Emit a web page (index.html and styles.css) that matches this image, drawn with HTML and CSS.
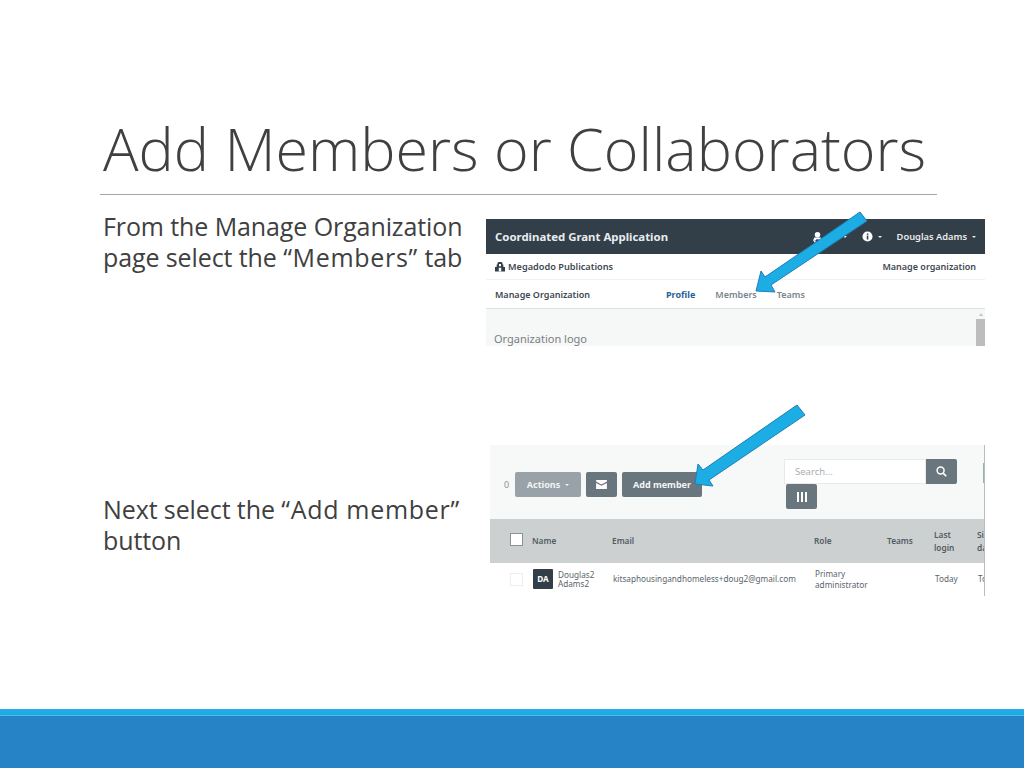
FILE: index.html
```html
<!DOCTYPE html>
<html lang="en">
<head>
<meta charset="utf-8">
<title>Add Members or Collaborators</title>
<link rel="stylesheet" href="styles.css">
</head>
<body>
<main class="slide">
  <header class="head">
    <h1 class="title">Add Members or Collaborators</h1>
  </header>
  <section class="content">
    <div class="step step-one">
      <p class="step-text">From the Manage Organization page select the <span class="quoted">“Members”</span> tab</p>
      <div class="shot shot-org">
        <div class="navbar">
          <span class="brand">Coordinated Grant Application</span>
          <span class="nav-right">
            <svg class="ic-award" viewBox="0 0 12 12"><circle cx="6" cy="3.500" r="3" fill="#fff"/><path d="M2.500 6.500h7l1.500 3.500H8.500L7 8.500H5L3.500 10H1z" fill="#fff"/><circle cx="3" cy="11" r="1" fill="#fff"/><circle cx="9" cy="11" r="1" fill="#fff"/></svg>
            <span class="caret caret-award"></span>
            <svg class="ic-info" viewBox="0 0 12 12"><circle cx="6" cy="6" r="5.500" fill="#fff"/><rect x="5.200" y="5" width="1.700" height="4.300" fill="#323e48"/><rect x="5.200" y="2.700" width="1.700" height="1.500" fill="#323e48"/></svg>
            <span class="caret caret-info"></span>
            <span class="user">Douglas Adams</span>
            <span class="caret"></span>
          </span>
        </div>
        <div class="orgbar">
          <span class="org">
            <svg class="ic-org" viewBox="0 0 12 12"><path d="M3 1.500C3 .5 4 0 6 0s3 .5 3 1.500V3h1v3h2v5.500H0V6h2V3h1z" fill="#323e48"/><path d="M4.500 7h3v4.500h-3zM4.800 2.500h2.400v2.500H4.800z" fill="#fff"/></svg>
            Megadodo Publications
          </span>
          <span class="org-link">Manage organization</span>
        </div>
        <div class="tabbar">
          <span class="tab-title">Manage Organization</span>
          <span class="tab tab-active">Profile</span>
          <span class="tab">Members</span>
          <span class="tab">Teams</span>
        </div>
        <div class="pane">
          <span class="pane-label">Organization logo</span>
          <span class="scrollbar"><span class="scroll-arrow"></span><span class="scroll-thumb"></span></span>
        </div>
      </div>
    </div>
    <div class="step step-two">
      <p class="step-text">Next select the <span class="quoted">“Add member”</span> button</p>
      <div class="shot shot-members">
        <div class="toolbar">
          <div class="tools">
            <span class="count">0</span>
            <span class="btn btn-muted">Actions <span class="caret"></span></span>
            <span class="btn btn-icon"><svg class="ic-mail" viewBox="0 0 12 10"><path d="M0 0h12v1.800L6 5 0 1.800z" fill="#fff"/><path d="M0 3.200 6 6.400l6-3.200V10H0z" fill="#fff"/></svg></span>
            <span class="btn btn-add">Add member</span>
          </div>
          <div class="search-area">
            <div class="search">
              <span class="search-input">Search...</span>
              <span class="btn btn-icon btn-search"><svg class="ic-search" viewBox="0 0 12 12"><circle cx="5" cy="5" r="3.800" fill="none" stroke="#fff" stroke-width="1.600"/><path d="m8 8 3.200 3.200" stroke="#fff" stroke-width="1.800"/></svg></span>
            </div>
            <span class="btn btn-icon btn-cols"><svg class="ic-cols" viewBox="0 0 10 10"><path d="M0 0h2v10H0zM4 0h2v10H4zM8 0h2v10H8z" fill="#fff"/></svg></span>
          </div>
          <span class="edge-mark"></span>
        </div>
        <div class="thead">
          <span class="check check-head"></span>
          <span class="c-name">Name</span>
          <span class="c-email">Email</span>
          <span class="c-role">Role</span>
          <span class="c-teams">Teams</span>
          <span class="c-login">Last<br>login</span>
          <span class="c-sign">Si<br>da</span>
        </div>
        <div class="trow">
          <span class="check"></span>
          <span class="avatar">DA</span>
          <span class="person">Douglas2<br>Adams2</span>
          <span class="r-email">kitsaphousingandhomeless+doug2@gmail.com</span>
          <span class="r-role">Primary<br>administrator</span>
          <span class="r-login">Today</span>
          <span class="r-sign">To</span>
        </div>
      </div>
    </div>
  </section>
  <footer class="foot">
    <div class="foot-stripe"></div>
    <div class="foot-band"></div>
  </footer>
  <svg class="arrows" viewBox="0 0 1024 768" aria-hidden="true">
    <polygon class="arrow" points="860,212 867,221 771,285 775,292 756,291 761,271 765,277"/>
    <polygon class="arrow" points="797,405 805,415 709,480 713,486 695,484 698,464 703,470"/>
  </svg>
</main>
</body>
</html>
```
FILE: styles.css
```css
* { box-sizing: border-box; }
html, body { margin: 0; padding: 0; background: #fff; }
.slide { position: relative; width: 1024px; height: 768px; overflow: hidden; display: flex; flex-direction: column; background: #fff; font-family: "Open Sans", sans-serif; }

.head { height: 195px; margin: 0 87px 0 100px; border-bottom: 1px solid #a6a6a6; padding: 108px 0 0 3px; }
.title { margin: 0; font-family: "Open Sans", sans-serif; font-weight: 300; font-size: 59.200px; line-height: 80px; color: #404040; white-space: nowrap; }

.content { flex: 1; display: flex; flex-direction: column; }
.step { display: flex; padding-left: 103px; }
.step-text { margin: 0; font-size: 25px; line-height: 30.500px; color: #404040; flex: none; letter-spacing: -0.100px; }
.quoted { letter-spacing: 0.700px; }
.step-one { height: 250px; padding-top: 16px; }
.step-two { height: 264px; }
.step-one .step-text { width: 383px; }
.step-two .step-text { width: 387px; padding-top: 49px; }

.shot { background: #fff; color: #3d4852; font-family: "Noto Sans", sans-serif; font-size: 9px; overflow: hidden; flex: none; }
.shot-org { width: 499px; height: 127px; margin-top: 8px; font-weight: 600; }
.shot-members { width: 495px; height: 151px; border-right: 1px solid #b9bdc0; }

.navbar { height: 35px; background: #323e48; color: #e9ecee; display: flex; align-items: center; justify-content: space-between; padding: 0 9px; }
.brand { font-size: 11.400px; font-weight: 700; }
.nav-right { display: flex; align-items: center; }
.ic-award { width: 11px; height: 12px; }
.ic-info { width: 11px; height: 11px; }
.caret { display: inline-block; width: 0; height: 0; border-left: 2.500px solid transparent; border-right: 2.500px solid transparent; border-top: 2.500px solid currentColor; margin-left: 5px; vertical-align: middle; }
.caret-award { margin-left: 20px; margin-right: 15px; }
.caret-info { margin-right: 15px; }
.user { font-size: 9.300px; }

.orgbar { height: 26px; display: flex; align-items: center; justify-content: space-between; padding: 0 9px; border-bottom: 1px solid #eef0f1; }
.org { display: flex; align-items: center; gap: 3px; font-size: 9.200px; }
.ic-org { width: 10px; height: 10px; }
.tabbar { height: 29px; display: flex; align-items: center; padding-left: 9px; border-bottom: 1px solid #dfe2e4; }
.tab-title { width: 171px; }
.tab { color: #7b858c; margin-right: 20px; }
.tab-active { color: #1f5f94; font-weight: 700; }
.pane { height: 37px; background: #f6f7f7; display: flex; justify-content: space-between; align-items: flex-end; padding-left: 8px; }
.pane-label { font-size: 11px; font-weight: 400; color: #7a7f83; line-height: 15px; }
.scrollbar { width: 9px; height: 100%; display: flex; flex-direction: column; align-items: center; }
.scroll-arrow { width: 0; height: 0; margin: 4px 0 3px; border-left: 2px solid transparent; border-right: 2px solid transparent; border-bottom: 3px solid #c5c5c5; }
.scroll-thumb { flex: 1; width: 100%; background: #bdbdbd; }

.toolbar { height: 74px; background: #f7f8f8; display: flex; padding-left: 14px; position: relative; }
.tools { display: flex; align-items: center; gap: 5px; height: 25px; margin-top: 27px; width: 280px; }
.count { font-weight: 400; color: #8a9196; width: 6px; }
.btn { height: 25px; display: inline-flex; align-items: center; justify-content: center; background: #69767e; color: #f3f4f5; border-radius: 2px; font-weight: 700; padding: 0 11px; }
.btn-muted { background: #98a2a8; width: 66px; padding: 0; }
.btn-icon { width: 31px; padding: 0; }
.btn-add { width: 80px; padding: 0; }
.ic-mail { width: 11px; height: 9px; }
.search-area { display: flex; flex-direction: column; margin-top: 14px; }
.search { display: flex; width: 173px; }
.search-input { width: 142px; height: 25px; background: #fff; border: 1px solid #e8eaeb; color: #a9aeb2; padding-left: 10px; line-height: 23px; font-size: 9.500px; font-weight: 400; }
.btn-search { border-radius: 0 2px 2px 0; }
.ic-search { width: 11px; height: 11px; }
.btn-cols { margin-left: 2px; }
.ic-cols { width: 10px; height: 10px; }
.edge-mark { position: absolute; right: 0; top: 18px; width: 1px; height: 20px; background: #8fb5a8; }

.thead, .trow { position: relative; }
.thead { height: 44px; background: #cdd0d1; font-weight: 600; font-size: 8.300px; color: #525c63; }
.thead span, .trow span { position: absolute; }
.check { width: 13px; height: 13px; background: #fff; border: 1px solid #eceeef; left: 20px; top: 10px; }
.check-head { border-color: #8b9297; top: 14px; }
.c-name { left: 42px; top: 16px; }
.c-email { left: 122px; top: 16px; }
.c-role { left: 324px; top: 16px; }
.c-teams { left: 397px; top: 16px; }
.c-login { left: 444px; top: 9px; line-height: 13px; }
.c-sign { left: 487px; top: 9px; line-height: 13px; }
.trow { height: 33px; font-weight: 400; font-size: 8.200px; color: #5b646b; }
.avatar { left: 43px; top: 6px; width: 20px; height: 20px; background: #323e48; color: #fff; font-weight: 700; text-align: center; line-height: 20px; border-radius: 1px; }
.person { left: 68px; top: 7px; line-height: 9px; }
.r-email { left: 123px; top: 10px; white-space: nowrap; }
.r-role { left: 325px; top: 5px; line-height: 11px; white-space: nowrap; }
.r-login { left: 445px; top: 10px; }
.r-sign { left: 488px; top: 10px; }

.foot { display: flex; flex-direction: column; flex: none; height: 59px; margin-top: auto; }
.foot-stripe { height: 7px; background: #1cade4; border-top: 1px solid #3aa6dc; border-bottom: 1px solid #4fbbe8; }
.foot-band { flex: 1; background: #2683c6; }

.arrows { position: absolute; inset: 0; width: 1024px; height: 768px; pointer-events: none; }
.arrow { fill: #1cade4; stroke: #1f7fb8; stroke-width: 1; }
```
